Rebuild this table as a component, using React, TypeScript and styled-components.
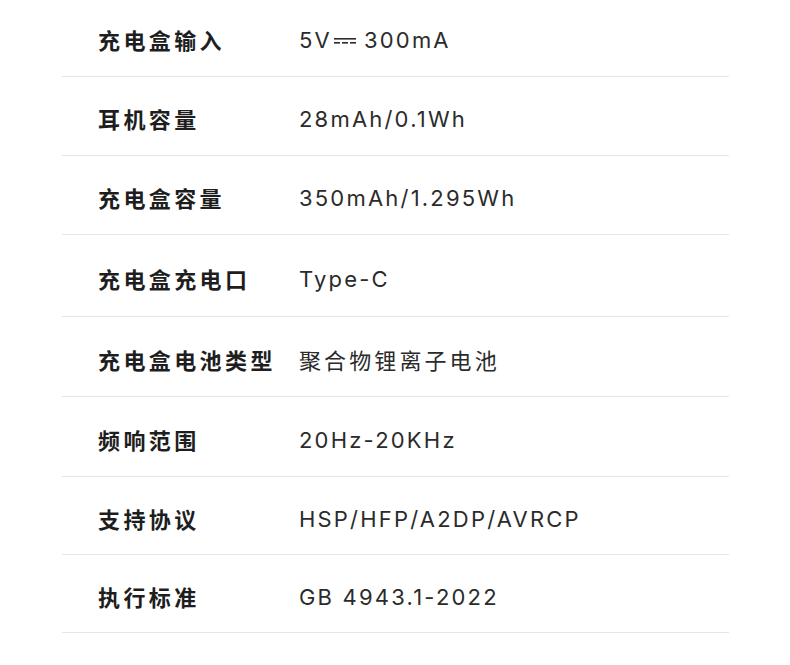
import React, { FC } from 'react';
import styled, { createGlobalStyle } from 'styled-components';

const GlobalStyle = createGlobalStyle`
  html, body {
    margin: 0;
    padding: 0;
    background: #ffffff;
  }
  body {
    font-family: "Inter", "Noto Sans CJK SC", sans-serif;
  }
`;

const SpecTable = styled.div`
  width: 667px;
  margin: -3px 0 0 62px;
  display: flex;
  flex-direction: column;
`;

const SpecRow = styled.div<{ $h: number }>`
  display: grid;
  grid-template-columns: 237px 1fr;
  align-items: center;
  height: ${({ $h }) => $h}px;
  padding-top: 6px;
  box-sizing: border-box;
  border-bottom: 1px solid #e6e6e6;
`;

const Label = styled.div`
  padding-left: 36px;
  font-family: "Noto Sans CJK SC", sans-serif;
  font-weight: 700;
  font-size: 22px;
  letter-spacing: 3.4px;
  color: #1e1e1e;
  line-height: 30px;
  white-space: nowrap;
  margin-top: -2px;
`;

const Value = styled.div<{ $cjk?: boolean }>`
  font-family: ${({ $cjk }) =>
    $cjk ? '"Noto Sans CJK SC", sans-serif' : '"Inter", "Noto Sans CJK SC", sans-serif'};
  font-weight: 400;
  font-size: 22px;
  letter-spacing: ${({ $cjk }) => ($cjk ? '3.1px' : '2.2px')};
  color: #2b2b2b;
  line-height: 30px;
  white-space: nowrap;
  display: flex;
  align-items: center;
  margin-top: ${({ $cjk }) => ($cjk ? '-2px' : '0')};
`;

const DcMark = styled.svg`
  width: 22px;
  height: 8px;
  margin: 2px 8px 0 2px;
  flex: none;
`;

// direct-current symbol: solid bar over a dashed one
const DirectCurrent: FC = () => (
  <DcMark viewBox="0 0 22 8">
    <rect x="0" y="1" width="22" height="1.6" fill="#2b2b2b" />
    <rect x="0" y="5" width="6" height="1.6" fill="#2b2b2b" />
    <rect x="8" y="5" width="6" height="1.6" fill="#2b2b2b" />
    <rect x="16" y="5" width="6" height="1.6" fill="#2b2b2b" />
  </DcMark>
);

type Spec = { label: string; value: React.ReactNode; cjk?: boolean; h: number };

const specs: Spec[] = [
  {
    label: '充电盒输入',
    value: (
      <>
        5V
        <DirectCurrent />
        300mA
      </>
    ),
    h: 80,
  },
  { label: '耳机容量', value: '28mAh/0.1Wh', h: 79 },
  { label: '充电盒容量', value: '350mAh/1.295Wh', h: 79 },
  { label: '充电盒充电口', value: 'Type-C', h: 82 },
  { label: '充电盒电池类型', value: '聚合物锂离子电池', cjk: true, h: 80 },
  { label: '频响范围', value: '20Hz-20KHz', h: 80 },
  { label: '支持协议', value: 'HSP/HFP/A2DP/AVRCP', h: 78 },
  { label: '执行标准', value: 'GB 4943.1-2022', h: 78 },
];

const App: FC = () => (
  <>
    <GlobalStyle />
    <SpecTable>
      {specs.map((s) => (
        <SpecRow key={s.label} $h={s.h}>
          <Label>{s.label}</Label>
          <Value $cjk={s.cjk}>{s.value}</Value>
        </SpecRow>
      ))}
    </SpecTable>
  </>
);

export default App;
